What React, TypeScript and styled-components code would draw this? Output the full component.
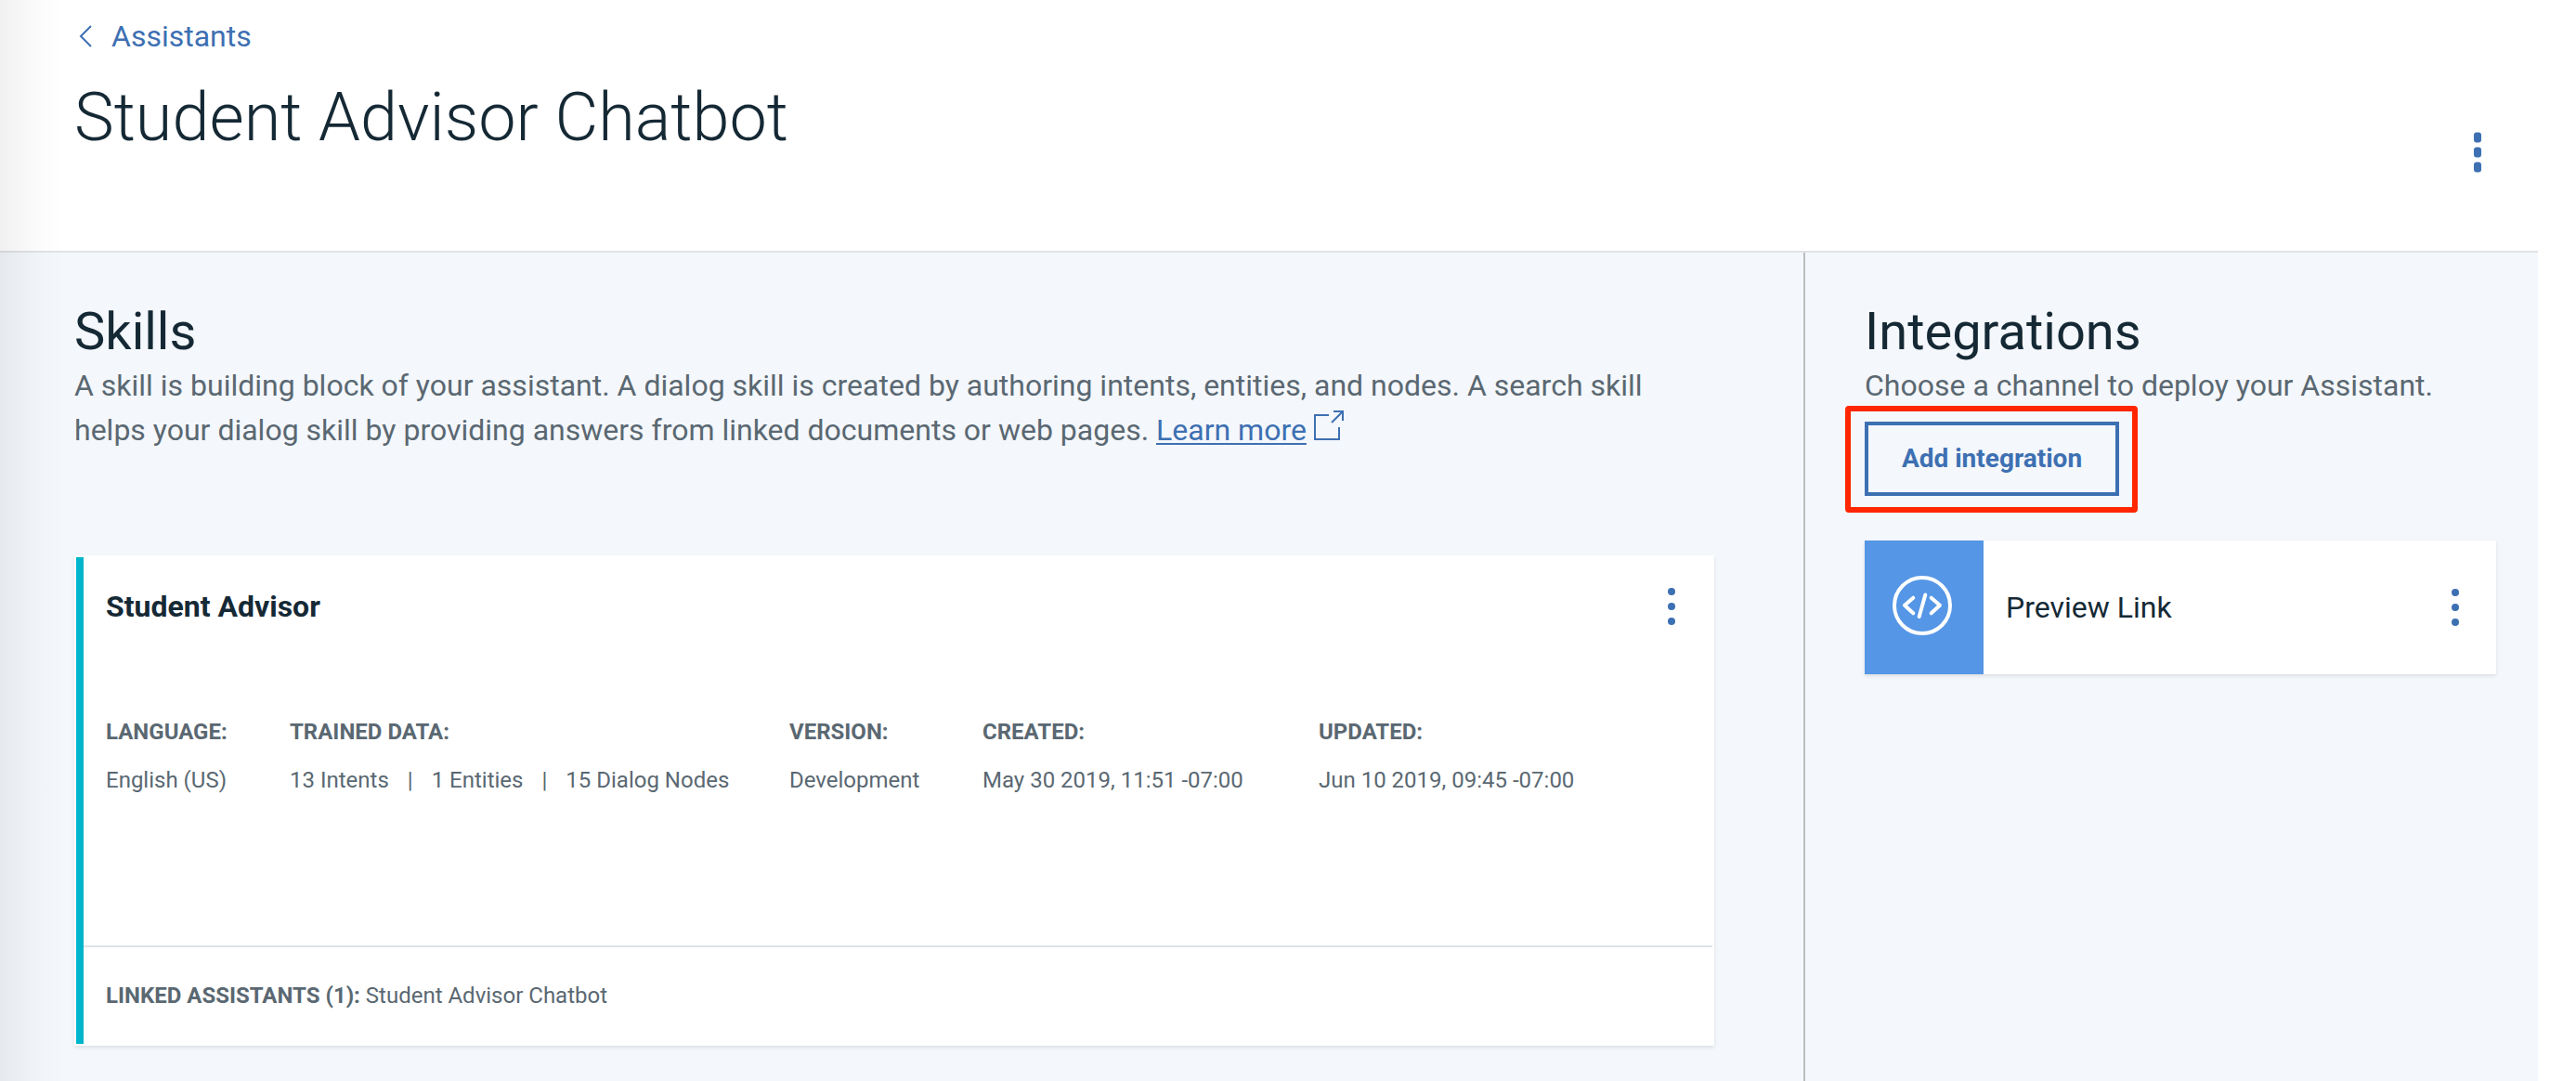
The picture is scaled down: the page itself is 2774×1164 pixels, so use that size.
import React from 'react';
import styled, { createGlobalStyle } from 'styled-components';

const color = {
  ink: '#152935',
  text: '#5a6872',
  brand: '#3d70b2',
  tile: '#5596e6',
  teal: '#00b4cc',
  canvas: '#f4f7fb',
  line: '#dfe3e6',
  divider: '#bdbdbd',
  callout: '#ff2600',
};

const GlobalStyle = createGlobalStyle`
  *, *::before, *::after { box-sizing: border-box; }
  body {
    margin: 0;
    background: #ffffff;
    color: ${color.ink};
    font-family: Roboto, "Liberation Sans", sans-serif;
    font-size: 32px;
    line-height: 48px;
  }
  h1, h2, h3, p, dl, dd { margin: 0; }
`;

const Page = styled.div`
  position: relative;
  display: flex;
  flex-direction: column;
  min-height: 100vh;
  margin-right: 41px;
`;

const EdgeShadow = styled.div`
  position: absolute;
  inset: 0 auto 0 0;
  width: 70px;
  pointer-events: none;
  background: linear-gradient(
    to right,
    rgba(0, 0, 0, 0.06),
    rgba(0, 0, 0, 0.035) 20px,
    rgba(0, 0, 0, 0.01) 45px,
    transparent
  );
`;

const Header = styled.header`
  display: flex;
  flex-direction: column;
  align-items: flex-start;
  gap: 16px;
  padding: 15px 45px 86px 80px;
  border-bottom: 2px solid ${color.line};
`;

const BackLink = styled.a`
  display: inline-flex;
  align-items: center;
  gap: 16px;
  color: ${color.brand};
  text-decoration: none;
`;

const TitleRow = styled.div`
  display: flex;
  align-self: stretch;
  align-items: flex-end;
  justify-content: space-between;
`;

const PageTitle = styled.h1`
  padding-bottom: 9px;
  font-size: 72px;
  font-weight: 300;
  line-height: 96px;
`;

const MenuButton = styled.button`
  display: flex;
  flex: none;
  align-items: center;
  justify-content: center;
  width: 40px;
  height: 40px;
  padding: 0;
  border: 0;
  background: none;
  color: ${color.brand};
  cursor: pointer;
`;

const Body = styled.div`
  display: grid;
  flex: 1;
  grid-template-columns: minmax(0, 1fr) 791px;
  background: ${color.canvas};
`;

const SkillsPanel = styled.main`
  padding: 51px 96px 38px 80px;
`;

const IntegrationsPanel = styled.aside`
  padding: 51px 45px 38px 64px;
  border-left: 2px solid ${color.divider};
`;

const PanelTitle = styled.h2`
  font-size: 56px;
  font-weight: 400;
  line-height: 68px;
`;

const PanelText = styled.p`
  max-width: 1740px;
  color: ${color.text};
`;

const TextLink = styled.a`
  color: ${color.brand};
  text-decoration: underline;
  text-decoration-thickness: 2px;
  text-underline-offset: 3px;
`;

const ExternalIcon = styled.svg`
  margin-left: 8px;
  color: ${color.brand};
  vertical-align: baseline;
`;

const Card = styled.article`
  background: #ffffff;
  box-shadow: 0 2px 4px rgba(0, 0, 0, 0.1);
`;

const SkillCard = styled(Card)`
  margin-top: 111px;
  padding: 2px;
`;

const SkillInner = styled.div`
  border-left: 8px solid ${color.teal};
`;

const SkillHead = styled.div`
  display: flex;
  align-items: center;
  justify-content: space-between;
  padding: 29px 24px 95px;
`;

const SkillName = styled.h3`
  font-size: 32px;
  font-weight: 700;
`;

const Details = styled.dl`
  display: grid;
  grid-template-columns: 198px 538px 208px 362px auto;
  padding: 0 24px 162px;
  color: ${color.text};
  font-size: 24px;
  line-height: 32px;
`;

const DetailLabel = styled.dt`
  margin-bottom: 20px;
  font-weight: 700;
  text-transform: uppercase;
`;

const Stats = styled.span`
  display: flex;
  gap: 20px;
`;

const SkillFoot = styled.p`
  padding: 36px 24px;
  border-top: 2px solid ${color.line};
  color: ${color.text};
  font-size: 24px;
  line-height: 32px;
`;

const Callout = styled.div`
  position: relative;
  width: max-content;
  margin-top: 15px;

  &::after {
    content: '';
    position: absolute;
    inset: -17px -20px -18px -21px;
    border: 6px solid ${color.callout};
    border-radius: 4px;
    pointer-events: none;
  }
`;

const OutlineButton = styled.button`
  display: block;
  min-width: 274px;
  height: 80px;
  padding: 0 32px;
  border: 4px solid ${color.brand};
  background: transparent;
  color: ${color.brand};
  font: 700 28px/40px Roboto, "Liberation Sans", sans-serif;
  cursor: pointer;
`;

const IntegrationCard = styled(Card)`
  display: flex;
  align-items: center;
  margin-top: 48px;
  padding-right: 24px;
`;

const IntegrationTile = styled.div`
  display: flex;
  align-items: center;
  justify-content: center;
  width: 128px;
  height: 144px;
  padding: 0 4px 4px 0;
  background: ${color.tile};
`;

const IntegrationName = styled.h3`
  flex: 1;
  padding-left: 24px;
  font-size: 32px;
  font-weight: 400;
`;

function Menu({ label, tall = false }: { label: string; tall?: boolean }) {
  const height = tall ? 11 : 8;
  return (
    <MenuButton type="button" aria-label={label}>
      <svg width="8" height="44" viewBox="0 0 8 44" fill="currentColor" aria-hidden="true">
        {[6, 22, 38].map((center) => (
          <rect key={center} y={center - height / 2} width="8" height={height} rx={tall ? 3 : 4} />
        ))}
      </svg>
    </MenuButton>
  );
}

const details: { label: string; values: string[] }[] = [
  { label: 'Language:', values: ['English (US)'] },
  { label: 'Trained data:', values: ['13 Intents', '1 Entities', '15 Dialog Nodes'] },
  { label: 'Version:', values: ['Development'] },
  { label: 'Created:', values: ['May 30 2019, 11:51 -07:00'] },
  { label: 'Updated:', values: ['Jun 10 2019, 09:45 -07:00'] },
];

export default function App() {
  return (
    <>
      <GlobalStyle />
      <Page>
        <Header>
          <BackLink href="#assistants">
            <svg width="24" height="24" viewBox="0 0 24 24" fill="none" stroke="currentColor" strokeWidth="2" aria-hidden="true">
              <path d="M18 1 7 12l11 11" />
            </svg>
            Assistants
          </BackLink>
          <TitleRow>
            <PageTitle>Student Advisor Chatbot</PageTitle>
            <Menu label="Assistant options" tall />
          </TitleRow>
        </Header>
        <Body>
          <SkillsPanel>
            <PanelTitle>Skills</PanelTitle>
            <PanelText>
              A skill is building block of your assistant. A dialog skill is created by authoring intents, entities,
              and nodes. A search skill helps your dialog skill by providing answers from linked documents or web
              pages. <TextLink href="#learn-more">Learn more</TextLink>
              <ExternalIcon width="32" height="32" viewBox="0 0 32 32" fill="none" stroke="currentColor" strokeWidth="2" aria-hidden="true">
                <path d="M16 5H1v26h26V18M21 1h10v10M31 1 19 13" />
              </ExternalIcon>
            </PanelText>
            <SkillCard>
              <SkillInner>
                <SkillHead>
                  <SkillName>Student Advisor</SkillName>
                  <Menu label="Skill options" />
                </SkillHead>
                <Details>
                  {details.map(({ label, values }) => (
                    <div key={label}>
                      <DetailLabel>{label}</DetailLabel>
                      <dd>
                        <Stats>
                          {values.map((value, index) => (
                            <React.Fragment key={value}>
                              {index > 0 && <span>|</span>}
                              <span>{value}</span>
                            </React.Fragment>
                          ))}
                        </Stats>
                      </dd>
                    </div>
                  ))}
                </Details>
                <SkillFoot>
                  <strong>LINKED ASSISTANTS (1):</strong> Student Advisor Chatbot
                </SkillFoot>
              </SkillInner>
            </SkillCard>
          </SkillsPanel>
          <IntegrationsPanel>
            <PanelTitle>Integrations</PanelTitle>
            <PanelText>Choose a channel to deploy your Assistant.</PanelText>
            <Callout>
              <OutlineButton type="button">Add integration</OutlineButton>
            </Callout>
            <IntegrationCard>
              <IntegrationTile>
                <svg width="64" height="64" viewBox="0 0 64 64" fill="none" stroke="#ffffff" strokeWidth="4" strokeLinecap="round" strokeLinejoin="round" aria-hidden="true">
                  <circle cx="32" cy="32" r="30" />
                  <path d="M22.3 23.7 13 31.8l9.3 8.5M41.7 23.7l9.3 8.1-9.3 8.5M35.3 20.5 28.7 44" />
                </svg>
              </IntegrationTile>
              <IntegrationName>Preview Link</IntegrationName>
              <Menu label="Preview Link options" />
            </IntegrationCard>
          </IntegrationsPanel>
        </Body>
        <EdgeShadow />
      </Page>
    </>
  );
}
